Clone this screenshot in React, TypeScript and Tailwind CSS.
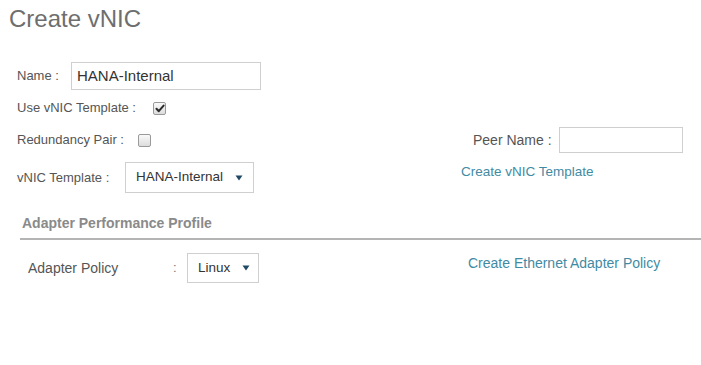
import React from "react";

function Checkbox({ checked }: { checked?: boolean }) {
  return (
    <span className="relative inline-flex h-[13px] w-[13px] items-center justify-center rounded-[2px] border border-[#9a9a9a] bg-gradient-to-b from-[#fafafa] to-[#dcdcdc]">
      {checked && (
        <svg width="10" height="9" viewBox="0 0 10 9" className="absolute">
          <path d="M1.5 4.8 L3.8 7.2 L8.6 1.6" fill="none" stroke="#2b2b2b" strokeWidth="2" strokeLinecap="round" strokeLinejoin="round" />
        </svg>
      )}
    </span>
  );
}

function Caret() {
  return (
    <svg width="8" height="6" viewBox="0 0 8 6">
      <path d="M0.5 0.5 H7.5 L4 5.5 Z" fill="#1f4a66" />
    </svg>
  );
}

function Select({ value, width }: { value: string; width: string }) {
  return (
    <div className={`flex h-full items-center border border-[#cfcfcf] bg-white pl-[10px] text-[13.5px] text-[#333] ${width}`}>
      <span>{value}</span>
      <span className="ml-[12px] flex items-center">
        <Caret />
      </span>
    </div>
  );
}

export default function App() {
  return (
    <div className="h-[365px] w-[701px] overflow-hidden bg-white font-['Liberation_Sans',Arial,sans-serif] text-[13px] text-[#555]">
      <h1 className="pl-[9px] pt-[5px] text-[24px] leading-[28px] text-[#6e6e6e]">Create vNIC</h1>

      <div className="mt-[29px] pl-[17px]">
        <div className="flex h-[28px] items-center">
          <span className="w-[54px]">Name :</span>
          <div className="flex h-[28px] w-[190px] items-center border border-[#cfcfcf] pl-[5px] text-[15px] text-[#333]">
            HANA-Internal
          </div>
        </div>

        <div className="mt-[8px] flex h-[20px] items-center">
          <span className="w-[136px]">Use vNIC Template :</span>
          <Checkbox checked />
        </div>

        <div className="mt-[9px] flex h-[26px] items-center">
          <div className="flex w-[444px] items-center">
            <span className="w-[121px]">Redundancy Pair :</span>
            <Checkbox />
          </div>
          <span className="ml-[12px] w-[86px] text-[14px]">Peer Name :</span>
          <div className="h-[26px] w-[124px] border border-[#cfcfcf]" />
        </div>

        <div className="mt-[9px] flex items-start">
          <div className="flex h-[31px] w-[444px] items-center">
            <span className="w-[108px]">vNIC Template :</span>
            <Select value="HANA-Internal" width="w-[129px]" />
          </div>
          <a className="mt-[2px] text-[13.5px] leading-[16px] text-[#3f8ba3]">Create vNIC Template</a>
        </div>

        <div className="ml-[5px] mt-[22px] text-[14px] font-bold leading-[16px] text-[#8a8a8a]">
          Adapter Performance Profile
        </div>
        <div className="ml-[3px] mt-[7px] h-[2px] bg-[#b4b4b4]" />

        <div className="mt-[13px] flex items-start">
          <div className="flex h-[30px] w-[451px] items-center">
            <span className="ml-[11px] w-[145px] text-[14px]">Adapter Policy</span>
            <span className="w-[14px] text-[#777]">:</span>
            <Select value="Linux" width="w-[72px]" />
          </div>
          <a className="mt-[2px] text-[14px] leading-[16px] text-[#3f8ba3]">Create Ethernet Adapter Policy</a>
        </div>
      </div>
    </div>
  );
}
